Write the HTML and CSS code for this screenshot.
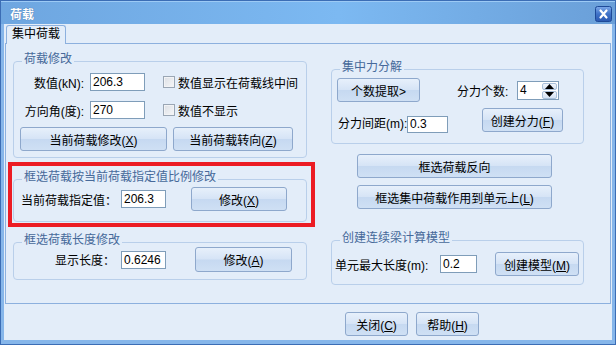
FILE: index.html
```html
<!DOCTYPE html>
<html lang="zh-CN">
<head>
    <meta charset="UTF-8">
    <title>荷载</title>
    <link rel="stylesheet" href="styles.css">
</head>
<body>
    <div class="window">
        <!-- Title bar -->
        <div class="titlebar">
            <span class="title">荷载</span>
            <span class="close">
                <svg width="17" height="16" viewBox="0 0 17 16">
                    <defs>
                        <linearGradient id="cg" x1="0" y1="0" x2="0" y2="1">
                            <stop offset="0" stop-color="#7eaaea"/>
                            <stop offset="0.5" stop-color="#3f72c8"/>
                            <stop offset="1" stop-color="#2a58b0"/>
                        </linearGradient>
                    </defs>
                    <rect x="0.5" y="0.5" width="16" height="15" rx="2" fill="url(#cg)" stroke="#1e4a98"/>
                    <path d="M5.5 4.5 L11.5 11.5 M11.5 4.5 L5.5 11.5" stroke="#fff" stroke-width="2.2" stroke-linecap="round"/>
                </svg>
            </span>
        </div>

        <div class="client">
            <div class="tabs">
                <div class="tab">集中荷载</div>
            </div>

            <div class="panel">
                <!-- Left column -->
                <div class="col">
                    <div class="group g-edit">
                        <div class="legend">荷载修改</div>
                        <div class="row r1">
                            <span class="lbl lbl-edit">数值(kN):</span>
                            <span class="input w55">206.3</span>
                            <span class="check"></span>
                            <span class="check-text">数值显示在荷载线中间</span>
                        </div>
                        <div class="row r2">
                            <span class="lbl lbl-edit">方向角(度):</span>
                            <span class="input w55">270</span>
                            <span class="check"></span>
                            <span class="check-text">数值不显示</span>
                        </div>
                        <div class="row r3">
                            <button class="btn b-modify">当前荷载修改(<u>X</u>)</button>
                            <button class="btn b-turn">当前荷载转向(<u>Z</u>)</button>
                        </div>
                    </div>

                    <div class="highlight">
                        <div class="group g-ratio">
                            <div class="legend">框选荷载按当前荷载指定值比例修改</div>
                            <div class="row">
                                <span class="lbl lbl-ratio">当前荷载指定值：</span>
                                <span class="input w45">206.3</span>
                                <button class="btn b-ratio">修改(<u>X</u>)</button>
                            </div>
                        </div>
                    </div>

                    <div class="group g-length">
                        <div class="legend">框选荷载长度修改</div>
                        <div class="row">
                            <span class="lbl lbl-length">显示长度：</span>
                            <span class="input w45">0.6246</span>
                            <button class="btn b-length">修改(<u>A</u>)</button>
                        </div>
                    </div>
                </div>

                <!-- Right column -->
                <div class="col">
                    <div class="group g-split">
                        <div class="legend">集中力分解</div>
                        <div class="row s1">
                            <button class="btn b-count">个数提取&gt;</button>
                            <span class="lbl lbl-count">分力个数:</span>
                            <span class="spin">
                                <span class="spin-val">4</span>
                                <span class="spin-btns">
                                    <span class="spin-btn"><svg width="9" height="5" viewBox="0 0 9 5"><path d="M0 5 L4.5 0 L9 5 Z" fill="#000"/></svg></span>
                                    <span class="spin-btn"><svg width="9" height="5" viewBox="0 0 9 5"><path d="M0 0 L4.5 5 L9 0 Z" fill="#000"/></svg></span>
                                </span>
                            </span>
                        </div>
                        <div class="row s2">
                            <span class="lbl lbl-gap">分力间距(m):</span>
                            <span class="input w41">0.3</span>
                            <button class="btn b-create">创建分力(<u>F</u>)</button>
                        </div>
                    </div>

                    <button class="btn b-wide b-reverse">框选荷载反向</button>
                    <button class="btn b-wide b-apply">框选集中荷载作用到单元上(<u>L</u>)</button>

                    <div class="group g-model">
                        <div class="legend">创建连续梁计算模型</div>
                        <div class="row">
                            <span class="lbl lbl-max">单元最大长度(m):</span>
                            <span class="input w37">0.2</span>
                            <button class="btn b-model">创建模型(<u>M</u>)</button>
                        </div>
                    </div>
                </div>
            </div>

            <div class="footer">
                <button class="btn b-foot">关闭(<u>C</u>)</button>
                <button class="btn b-foot">帮助(<u>H</u>)</button>
            </div>
        </div>
    </div>
</body>
</html>
```

FILE: styles.css
```css
* {
    margin: 0;
    padding: 0;
    box-sizing: border-box;
}

body {
    width: 616px;
    height: 345px;
    overflow: hidden;
    font-family: "Liberation Sans", "Noto Sans CJK SC", sans-serif;
    font-size: 12px;
    color: #000;
}

u {
    text-decoration: underline;
}

/* Window frame */
.window {
    width: 616px;
    height: 345px;
    border: 1px solid #3b6db5;
    background: #86b6ea;
    padding: 0 3px 4px;
    display: flex;
    flex-direction: column;
}

.titlebar {
    height: 23px;
    margin: 0 -3px;
    padding: 0 3px 0 9px;
    display: flex;
    align-items: center;
    justify-content: space-between;
    background: linear-gradient(90deg, #6ea6e0, #7cb9f2 55%, #6a9fd8);
    border-top: 1px solid #9ccaf5;
}

.title {
    color: #fff;
    font-weight: bold;
    font-size: 12px;
    text-shadow: 0 0 1px #3d6699;
}

.close {
    display: flex;
    margin-top: 2px;
}

.client {
    flex: 1;
    background: #e3edf9;
    padding: 0 1px 0 1px;
    display: flex;
    flex-direction: column;
}

/* Tabs */
.tabs {
    height: 19px;
    padding: 1px 0 0 1px;
    display: flex;
}

.tab {
    position: relative;
    z-index: 1;
    width: 60px;
    height: 19px;
    margin-bottom: -1px;
    border: 1px solid #8cb0de;
    border-bottom: none;
    border-radius: 3px 3px 0 0;
    background: #e3edf9;
    text-align: center;
    line-height: 17px;
}

.panel {
    height: 261px;
    border: 1px solid #8cb0de;
    display: grid;
    grid-template-columns: 294px 253px;
    column-gap: 24px;
    padding-left: 7px;
}

.col {
    display: flex;
    flex-direction: column;
    align-items: flex-start;
}

/* Group boxes */
.group {
    width: 100%;
    border: 1px solid #b9cfea;
    border-radius: 4px;
}

.legend {
    display: table;
    margin: -10px 0 0 8px;
    padding: 0 2px;
    line-height: 14px;
    background: #e3edf9;
    color: #46699a;
}

.row {
    display: flex;
    align-items: center;
}

.lbl {
    white-space: nowrap;
}

.input {
    height: 18px;
    border: 1px solid #7f9db9;
    background: #fff;
    padding-left: 2px;
    line-height: 16px;
}

.w55 { width: 55px; }
.w45 { width: 45px; }
.w41 { width: 41px; height: 17px; line-height: 15px; }
.w37 { width: 37px; }

.check {
    width: 12px;
    height: 12px;
    margin-left: 18px;
    border: 1px solid #9aa6b4;
    background: linear-gradient(135deg, #dcdfe4, #f6f7f9);
    box-shadow: inset 0 0 0 1px #f2f3f5;
}

.check-text {
    margin-left: 3px;
}

.btn {
    height: 24px;
    border: 1px solid #8ea8cc;
    border-radius: 3px;
    background: linear-gradient(#e7f0fb, #d6e4f6 48%, #c6d9f1 52%, #cfe0f4);
    font-family: inherit;
    font-size: 12px;
    color: #000;
    text-align: center;
    white-space: nowrap;
}

/* Left column groups */
.g-edit {
    margin-top: 17px;
    padding-bottom: 6px;
}

.lbl-edit {
    width: 70px;
    text-align: right;
    margin-right: 6px;
}

.r1 { margin-top: 7px; height: 18px; }
.r2 { margin-top: 10px; height: 18px; }
.r3 { margin-top: 8px; padding-left: 6px; gap: 6px; }

.b-modify { width: 147px; }
.b-turn { width: 120px; }

.highlight {
    margin: 4px -8px 0 -5px;
    border: 4px solid #ec1c24;
    padding: 0 4px 1px 1px;
    width: 307px;
}

.g-ratio {
    margin-top: 13px;
    padding-bottom: 10px;
}

.g-ratio .row {
    margin-top: 3px;
    padding-left: 7px;
}

.lbl-ratio { width: 100px; }
.b-ratio { width: 96px; margin-left: 25px; }

.g-length {
    margin-top: 15px;
    padding-bottom: 7px;
}

.g-length .row { padding-left: 41px; }
.g-length .btn { height: 25px; }
.lbl-length { width: 66px; }
.b-length { width: 97px; margin-left: 29px; }

/* Right column groups */
.g-split {
    margin-top: 25px;
    padding-bottom: 10px;
}

.s1 { margin-top: 4px; height: 24px; }
.b-count { width: 83px; margin-left: 5px; }
.lbl-count { width: 60px; margin-left: 37px; }

.spin {
    width: 42px;
    height: 19px;
    border: 1px solid #7f9db9;
    background: #fff;
    display: flex;
    justify-content: space-between;
}

.spin-val {
    padding-left: 2px;
    line-height: 17px;
}

.spin-btns {
    width: 15px;
    margin: 1px 1px 0 0;
    display: flex;
    flex-direction: column;
    gap: 1px;
}

.spin-btn {
    height: 8px;
    border: 1px solid #aac0da;
    border-radius: 2px;
    background: linear-gradient(#f2f6fc, #d5e2f3);
    display: flex;
    align-items: center;
    justify-content: center;
}

.s2 {
    margin-top: 6px;
    height: 25px;
    align-items: flex-start;
}

.lbl-gap {
    width: 69px;
    margin: 8px 0 0 6px;
    line-height: 17px;
}

.s2 .input { margin-top: 8px; }
.b-create { width: 81px; margin-left: 34px; }

.b-wide {
    width: 195px;
    margin-left: 26px;
}

.b-reverse { margin-top: 10px; }
.b-apply { margin-top: 7px; }

.g-model {
    margin-top: 31px;
    padding-bottom: 8px;
}

.g-model .row { margin-top: 7px; height: 24px; }
.lbl-max { width: 105px; margin-left: 3px; }
.b-model { width: 84px; margin-left: 18px; }

/* Footer buttons */
.footer {
    display: flex;
    gap: 8px;
    padding: 8px 0 0 340px;
}

.b-foot { width: 63px; }
```
